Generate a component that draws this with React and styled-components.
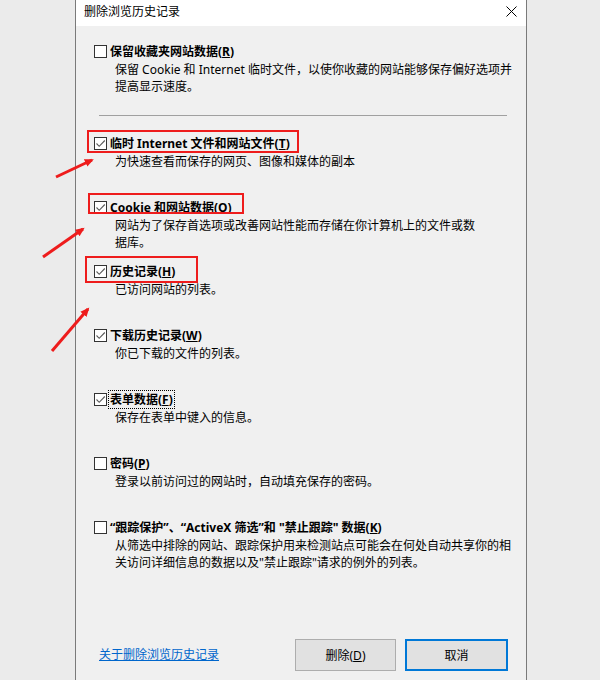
import React from "react";
import styled, { createGlobalStyle } from "styled-components";

const FONT = `"Noto Sans", "Noto Sans CJK SC", sans-serif`;

const Global = createGlobalStyle`
  html, body { margin: 0; padding: 0; background: #ebebeb; }
  body {
    font-family: ${FONT};
    font-size: 12px;
    color: #000;
  }
`;

const Page = styled.div`
  position: relative;
  width: 600px;
  height: 680px;
  overflow: hidden;
  background: #ebebeb;
`;

const Dialog = styled.div`
  box-sizing: border-box;
  margin-left: 75px;
  width: 452px;
  height: 680px;
  background: #f0f0f0;
  border-left: 1px solid #7a7a7a;
  border-right: 1px solid #7a7a7a;
  display: flex;
  flex-direction: column;
`;

const TitleBar = styled.div`
  height: 26px;
  background: #fff;
  display: flex;
  align-items: center;
  justify-content: space-between;
  padding: 0 9px 2px 8px;
  box-sizing: border-box;
`;

const Title = styled.span`
  font-size: 12px;
  line-height: 16px;
  color: #000;
`;

const Close = styled.svg`
  width: 11px;
  height: 11px;
  margin-top: -2px;
`;

const Content = styled.div`
  padding-top: 15px;
  display: flex;
  flex-direction: column;
`;

const Option = styled.div`
  height: ${(p) => (p.$auto ? "auto" : "64px")};
  display: flex;
  flex-direction: column;
`;

const LabelRow = styled.div`
  height: 20px;
  display: flex;
  align-items: center;
  padding-left: 18px;
  gap: 3px;
`;

const Box = styled.span`
  box-sizing: border-box;
  width: 13px;
  height: 13px;
  border: 1px solid #333;
  background: #fff;
  display: inline-flex;
  flex-shrink: 0;
`;

const Label = styled.span`
  font-weight: 700;
  font-size: 12px;
  line-height: 17px;
  white-space: nowrap;
  ${(p) =>
    p.$focus
      ? `outline: 1px dotted #000; outline-offset: 0px; padding: 0 1px; margin-left: -1px;`
      : ""}
`;

const Desc = styled.div`
  padding-left: 39px;
  font-size: 12px;
  line-height: 17px;
  white-space: nowrap;
  color: #000;
`;

const Separator = styled.div`
  height: 1px;
  background: #a0a0a0;
  margin: 20px 19px 17px 23px;
`;

const Footer = styled.div`
  margin-top: 58px;
  height: 32px;
  display: flex;
  align-items: center;
  padding: 0 18px 0 23px;
`;

const Link = styled.a`
  color: #0066cc;
  text-decoration: underline;
  font-size: 12px;
  line-height: 16px;
  cursor: pointer;
  margin-right: auto;
`;

const Button = styled.button`
  box-sizing: border-box;
  width: ${(p) => (p.$primary ? "103px" : "101px")};
  height: 32px;
  margin-left: ${(p) => (p.$primary ? "9px" : "0")};
  background: #e1e1e1;
  border: ${(p) => (p.$primary ? "2px solid #0078d7" : "1px solid #adadad")};
  font-family: ${FONT};
  font-size: 12px;
  color: #000;
  padding: 0;
  border-radius: 0;
`;

const Overlay = styled.svg`
  position: absolute;
  left: 0;
  top: 0;
  width: 600px;
  height: 680px;
  pointer-events: none;
`;

function Check({ checked }) {
  return (
    <Box>
      {checked && (
        <svg width="11" height="11" viewBox="0 0 11 11">
          <path d="M1.5 5.5 L4.2 8.3 L9.8 2.5" fill="none" stroke="#5a5a5a" strokeWidth="1.1" />
        </svg>
      )}
    </Box>
  );
}

const items = [
  {
    checked: true,
    label: <>临时 Internet 文件和网站文件(<u>T</u>)</>,
    desc: ["为快速查看而保存的网页、图像和媒体的副本"],
  },
  {
    checked: true,
    label: <>Cookie 和网站数据(<u>O</u>)</>,
    desc: ["网站为了保存首选项或改善网站性能而存储在你计算机上的文件或数", "据库。"],
  },
  {
    checked: true,
    label: <>历史记录(<u>H</u>)</>,
    desc: ["已访问网站的列表。"],
  },
  {
    checked: true,
    label: <>下载历史记录(<u>W</u>)</>,
    desc: ["你已下载的文件的列表。"],
  },
  {
    checked: true,
    focus: true,
    label: <>表单数据(<u>F</u>)</>,
    desc: ["保存在表单中键入的信息。"],
  },
  {
    checked: false,
    label: <>密码(<u>P</u>)</>,
    desc: ["登录以前访问过的网站时，自动填充保存的密码。"],
  },
  {
    checked: false,
    label: <>“跟踪保护”、“ActiveX 筛选”和 "禁止跟踪" 数据(<u>K</u>)</>,
    desc: [
      "从筛选中排除的网站、跟踪保护用来检测站点可能会在何处自动共享你的相",
      "关访问详细信息的数据以及\"禁止跟踪\"请求的例外的列表。",
    ],
  },
];

function Item({ checked, label, desc, focus, auto }) {
  return (
    <Option $auto={auto}>
      <LabelRow>
        <Check checked={checked} />
        <Label $focus={focus}>{label}</Label>
      </LabelRow>
      {desc.map((d, i) => (
        <Desc key={i}>{d}</Desc>
      ))}
    </Option>
  );
}

export default function App() {
  return (
    <>
      <Global />
      <Page>
        <Dialog>
          <TitleBar>
            <Title>删除浏览历史记录</Title>
            <Close viewBox="0 0 11 11">
              <path d="M0.5 0.5 L10.5 10.5 M10.5 0.5 L0.5 10.5" stroke="#000" strokeWidth="1" />
            </Close>
          </TitleBar>
          <Content>
            <Item
              auto
              checked={false}
              label={<>保留收藏夹网站数据(<u>R</u>)</>}
              desc={[
                "保留 Cookie 和 Internet 临时文件，以使你收藏的网站能够保存偏好选项并",
                "提高显示速度。",
              ]}
            />
            <Separator />
            {items.map((it, i) => (
              <Item key={i} {...it} />
            ))}
          </Content>
          <Footer>
            <Link>关于删除浏览历史记录</Link>
            <Button>删除(<u>D</u>)</Button>
            <Button $primary>取消</Button>
          </Footer>
        </Dialog>
        <Overlay viewBox="0 0 600 680">
          <defs>
            <marker id="ah" markerWidth="10" markerHeight="10" refX="7" refY="5" orient="auto" markerUnits="userSpaceOnUse">
              <path d="M0 1 L9 5 L0 9 Z" fill="#ee1c1c" />
            </marker>
          </defs>
          <rect x="88" y="131" width="210" height="21" fill="none" stroke="#ee1c1c" strokeWidth="2" />
          <rect x="89" y="194" width="154" height="19" fill="none" stroke="#ee1c1c" strokeWidth="2" />
          <rect x="86" y="257" width="111" height="25" fill="none" stroke="#ee1c1c" strokeWidth="2" />
          <line x1="56" y1="177" x2="92" y2="160" stroke="#ee1c1c" strokeWidth="3" markerEnd="url(#ah)" />
          <line x1="43" y1="257" x2="83" y2="229" stroke="#ee1c1c" strokeWidth="3" markerEnd="url(#ah)" />
          <line x1="52" y1="351" x2="88" y2="309" stroke="#ee1c1c" strokeWidth="3" markerEnd="url(#ah)" />
        </Overlay>
      </Page>
    </>
  );
}
